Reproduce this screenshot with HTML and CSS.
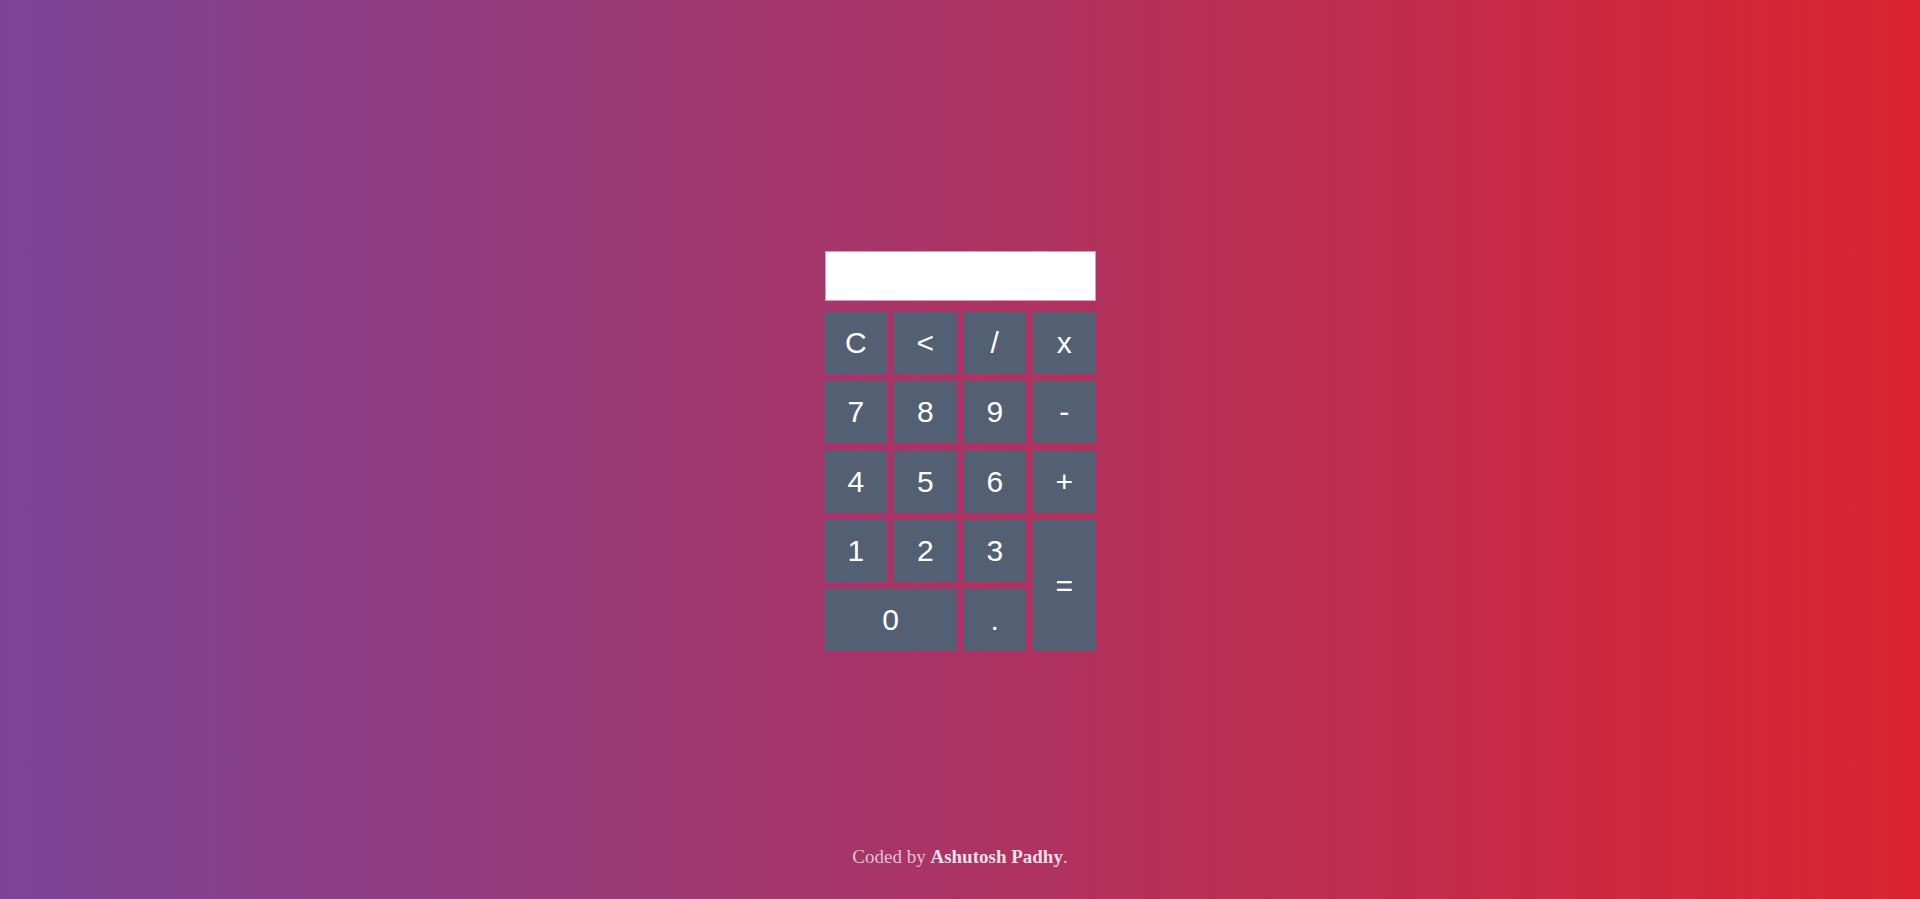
FILE: index.html
```html
<!DOCTYPE html>
<html lang="en">
<head>
<meta charset="utf-8">
<title>Calculator</title>
<link rel="stylesheet" href="styles.css">
</head>
<body>
<main class="page">
  <div class="calculator">
    <div class="display"></div>
    <div class="keys">
      <button class="key">C</button>
      <button class="key">&lt;</button>
      <button class="key">/</button>
      <button class="key">x</button>
      <button class="key">7</button>
      <button class="key">8</button>
      <button class="key">9</button>
      <button class="key">-</button>
      <button class="key">4</button>
      <button class="key">5</button>
      <button class="key">6</button>
      <button class="key">+</button>
      <button class="key">1</button>
      <button class="key">2</button>
      <button class="key">3</button>
      <button class="key key-equals">=</button>
      <button class="key key-zero">0</button>
      <button class="key">.</button>
    </div>
  </div>
</main>
<footer class="footer">Coded by <b>Ashutosh Padhy</b>.</footer>
</body>
</html>
```
FILE: styles.css
```css
html, body {
  margin: 0;
  padding: 0;
}
body {
  height: 100vh;
  display: flex;
  flex-direction: column;
  background: linear-gradient(to right, #7b4397, #dc2430);
  overflow: hidden;
}
.page {
  flex: 1;
  display: flex;
  justify-content: center;
  align-items: flex-start;
  padding-top: 251px;
}
.calculator {
  width: 271px;
  display: flex;
  flex-direction: column;
  gap: 11px;
}
.display {
  height: 48px;
  background: #ffffff;
  border: 1px solid #d99cb6;
}
.keys {
  display: grid;
  grid-template-columns: repeat(4, 62.5px);
  grid-auto-rows: 62px;
  column-gap: 7px;
  row-gap: 7.3px;
}
.key {
  margin: 0;
  padding: 0;
  border: none;
  background: #535f73;
  color: #ffffff;
  font-family: "Liberation Sans", Arial, sans-serif;
  font-size: 30px;
  display: flex;
  align-items: center;
  justify-content: center;
}
.key-zero {
  grid-column: span 2;
}
.key-equals {
  grid-column: 4;
  grid-row: 4 / span 2;
}
.footer {
  text-align: center;
  font-family: "Liberation Serif", "Times New Roman", serif;
  font-size: 19px;
  color: rgba(255, 255, 255, 0.7);
  padding-bottom: 31px;
}
.footer b {
  color: rgba(255, 255, 255, 0.85);
}
```
